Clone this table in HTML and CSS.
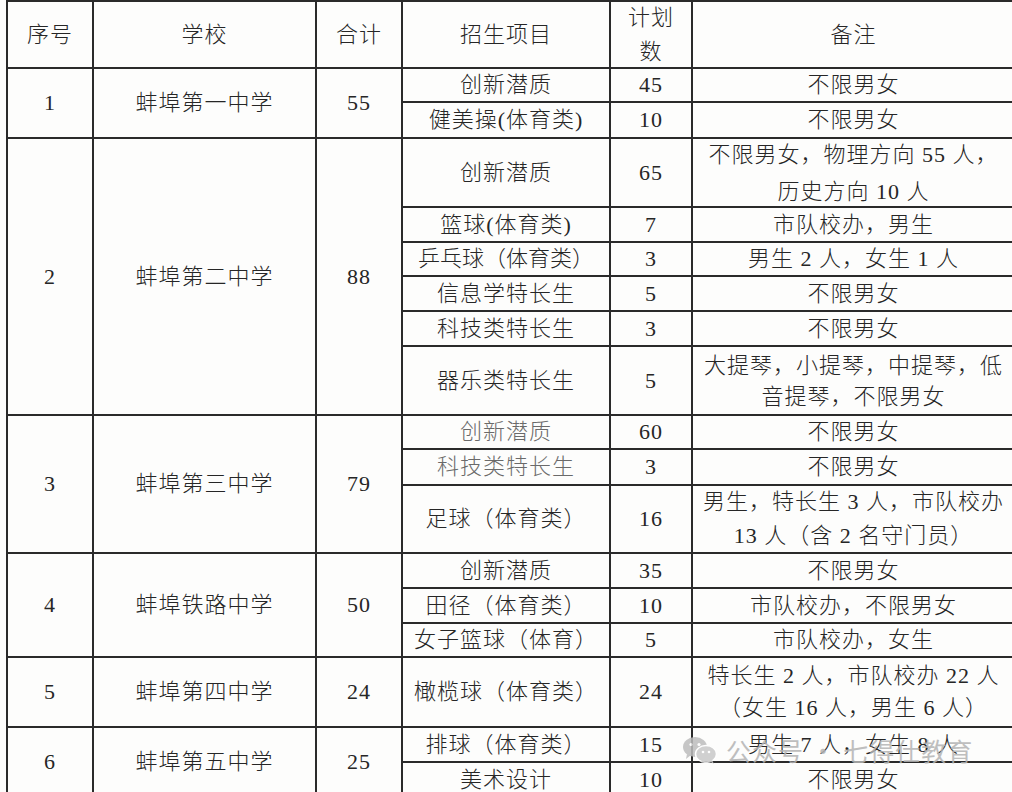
FILE: index.html
```html
<!DOCTYPE html>
<html lang="zh">
<head>
<meta charset="utf-8">
<link rel="stylesheet" href="styles.css">
</head>
<body>
<div class="page">
<table class="plan">
  <colgroup>
    <col class="c-no"><col class="c-school"><col class="c-total"><col class="c-item"><col class="c-num"><col class="c-note">
  </colgroup>
  <tr class="hhead">
    <th>序号</th><th>学校</th><th>合计</th><th>招生项目</th><th><div class="mc l34">计划<br>数</div></th><th>备注</th>
  </tr>
  <tr class="h34"><td rowspan="2">1</td><td rowspan="2">蚌埠第一中学</td><td rowspan="2">55</td><td>创新潜质</td><td>45</td><td>不限男女</td></tr>
  <tr class="h36"><td>健美操(体育类)</td><td>10</td><td>不限男女</td></tr>

  <tr class="h69"><td rowspan="6">2</td><td rowspan="6">蚌埠第二中学</td><td rowspan="6">88</td><td>创新潜质</td><td>65</td><td><div class="mc l37">不限男女，物理方向 55 人，<br>历史方向 10 人</div></td></tr>
  <tr class="h35"><td>篮球(体育类)</td><td>7</td><td>市队校办，男生</td></tr>
  <tr class="h34"><td class="nar">乒乓球（体育类）</td><td>3</td><td>男生 2 人，女生 1 人</td></tr>
  <tr class="h35"><td>信息学特长生</td><td>5</td><td>不限男女</td></tr>
  <tr class="h35"><td>科技类特长生</td><td>3</td><td>不限男女</td></tr>
  <tr class="h69"><td>器乐类特长生</td><td>5</td><td><div class="mc l31">大提琴，小提琴，中提琴，低<br>音提琴，不限男女</div></td></tr>

  <tr class="h34"><td rowspan="3">3</td><td rowspan="3">蚌埠第三中学</td><td rowspan="3">79</td><td class="faded">创新潜质</td><td>60</td><td>不限男女</td></tr>
  <tr class="h36"><td class="faded">科技类特长生</td><td>3</td><td>不限男女</td></tr>
  <tr class="h68"><td>足球（体育类）</td><td>16</td><td><div class="mc l34">男生，特长生 3 人，市队校办<br>13 人（含 2 名守门员）</div></td></tr>

  <tr class="h35"><td rowspan="3">4</td><td rowspan="3">蚌埠铁路中学</td><td rowspan="3">50</td><td>创新潜质</td><td>35</td><td>不限男女</td></tr>
  <tr class="h35"><td>田径（体育类）</td><td>10</td><td>市队校办，不限男女</td></tr>
  <tr class="h34"><td>女子篮球（体育）</td><td>5</td><td>市队校办，女生</td></tr>

  <tr class="h70"><td>5</td><td>蚌埠第四中学</td><td>24</td><td>橄榄球（体育类）</td><td>24</td><td><div class="mc l32">特长生 2 人，市队校办 22 人<br>（女生 16 人，男生 6 人）</div></td></tr>

  <tr class="h35"><td rowspan="2">6</td><td rowspan="2">蚌埠第五中学</td><td rowspan="2">25</td><td>排球（体育类）</td><td>15</td><td>男生 7 人，女生 8 人</td></tr>
  <tr class="h35"><td>美术设计</td><td>10</td><td>不限男女</td></tr>
</table>

<div class="watermark">
  <svg class="wm-icon" viewBox="0 0 36 30" width="36" height="30">
    <ellipse cx="13" cy="12" rx="12" ry="10" fill="#bdbdbd"/>
    <path d="M5 19 L4 24 L9 20 Z" fill="#bdbdbd"/>
    <ellipse cx="24" cy="19" rx="10.5" ry="8.5" fill="#c9c9c9" stroke="#fff" stroke-width="1.5"/>
    <path d="M30 25 L32 29 L27 26 Z" fill="#c9c9c9"/>
    <circle cx="9" cy="9.5" r="1.6" fill="#fff"/>
    <circle cx="17" cy="9.5" r="1.6" fill="#fff"/>
    <circle cx="21" cy="17" r="1.3" fill="#fff"/>
    <circle cx="27" cy="17" r="1.3" fill="#fff"/>
  </svg>
  <span class="wm-text">公众号 · 七得仕教育</span>
</div>
</div>
</body>
</html>
```

FILE: styles.css
```css
html, body {
  margin: 0;
  padding: 0;
  background: #fdfdfc;
  overflow: hidden;
}

.page {
  position: relative;
  width: 1012px;
  height: 792px;
  overflow: hidden;
  padding: 0 0 0 6px;
  box-sizing: border-box;
}

.plan {
  border-collapse: collapse;
  table-layout: fixed;
  width: 1008px;
  font-family: "Liberation Serif", "Noto Sans CJK SC", serif;
  font-size: 22px;
  font-weight: 300;
  color: #262626;
  letter-spacing: 1px;
}

.c-no { width: 86px; }
.c-school { width: 223px; }
.c-total { width: 86px; }
.c-item { width: 208px; }
.c-num { width: 82px; }
.c-note { width: 323px; }

.plan th, .plan td {
  border: 2px solid #2a2a2a;
  padding: 0;
  text-align: center;
  vertical-align: middle;
  font-weight: 300;
  line-height: 20px;
  white-space: nowrap;
}

.mc {
  height: 56px;
  display: flex;
  flex-direction: column;
  justify-content: center;
}
.l31 { line-height: 31px; }
.l32 { line-height: 32px; }
.l34 { line-height: 34px; }
.l37 { line-height: 37px; }

.plan td.nar { letter-spacing: 0; }
.plan td.faded { color: #6a6a6a; }

.hhead { height: 67px; }
.h34 { height: 34px; }
.h35 { height: 35px; }
.h36 { height: 36px; }
.h68 { height: 68px; }
.h69 { height: 69px; }
.h70 { height: 70px; }

.watermark {
  position: absolute;
  left: 682px;
  top: 732px;
  display: flex;
  align-items: center;
  gap: 8px;
  opacity: 0.85;
}

.wm-text {
  font-family: "Noto Sans CJK SC", sans-serif;
  font-size: 25px;
  color: #b4b4b4;
  letter-spacing: 1px;
}
```
